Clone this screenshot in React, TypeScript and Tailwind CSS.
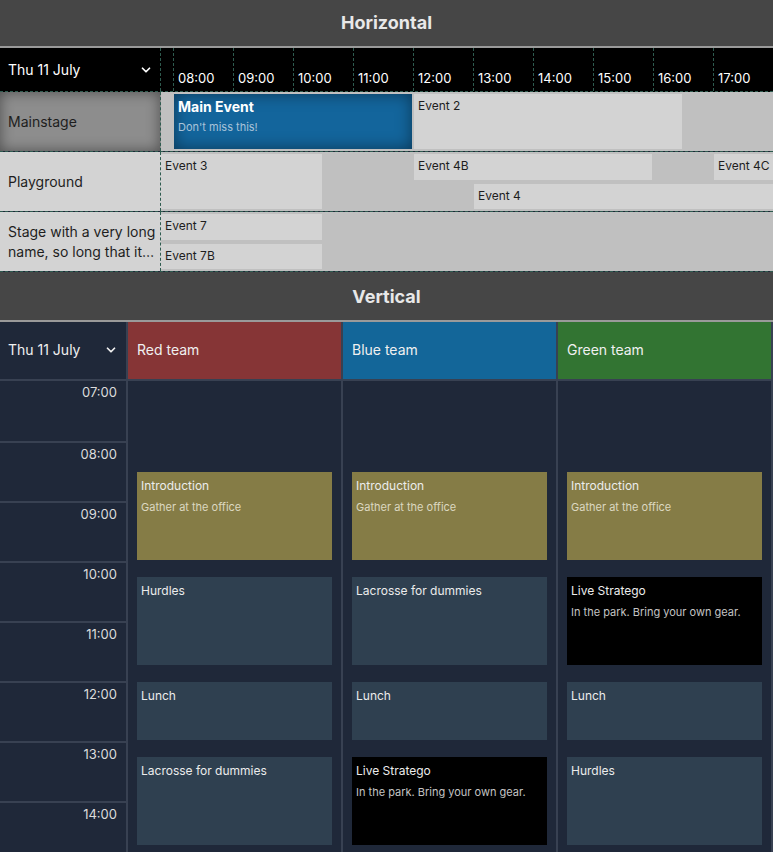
import { ChevronDown } from 'lucide-react';

type HEvent = { title: string; sub?: string; left: number; width: number; top: number; height: number; main?: boolean };
type HRow = { name: string; highlight?: boolean; events: HEvent[] };
type VEvent = { title: string; sub?: string; start: number; end: number; tone: 'olive' | 'slate' | 'black' };

const hours = ['08:00', '09:00', '10:00', '11:00', '12:00', '13:00', '14:00', '15:00', '16:00', '17:00'];

const rows: HRow[] = [
  {
    name: 'Mainstage',
    highlight: true,
    events: [
      { title: 'Main Event', sub: "Don't miss this!", left: 13, width: 238, top: 2, height: 55, main: true },
      { title: 'Event 2', left: 253, width: 268, top: 2, height: 55 }
    ]
  },
  {
    name: 'Playground',
    events: [
      { title: 'Event 3', left: 0, width: 161, top: 2, height: 55 },
      { title: 'Event 4B', left: 253, width: 238, top: 2, height: 26 },
      { title: 'Event 4C', left: 553, width: 120, top: 2, height: 26 },
      { title: 'Event 4', left: 313, width: 400, top: 32, height: 25 }
    ]
  },
  {
    name: 'Stage with a very long name, so long that it just keeps going on and on',
    events: [
      { title: 'Event 7', left: 0, width: 161, top: 2, height: 26 },
      { title: 'Event 7B', left: 0, width: 161, top: 32, height: 25 }
    ]
  }
];

// minutes from 07:00
const teams: { name: string; color: string; events: VEvent[] }[] = [
  {
    name: 'Red team',
    color: 'bg-[#863536]',
    events: [
      { title: 'Introduction', sub: 'Gather at the office', start: 90, end: 180, tone: 'olive' },
      { title: 'Hurdles', start: 195, end: 285, tone: 'slate' },
      { title: 'Lunch', start: 300, end: 360, tone: 'slate' },
      { title: 'Lacrosse for dummies', start: 375, end: 465, tone: 'slate' }
    ]
  },
  {
    name: 'Blue team',
    color: 'bg-[#136699]',
    events: [
      { title: 'Introduction', sub: 'Gather at the office', start: 90, end: 180, tone: 'olive' },
      { title: 'Lacrosse for dummies', start: 195, end: 285, tone: 'slate' },
      { title: 'Lunch', start: 300, end: 360, tone: 'slate' },
      { title: 'Live Stratego', sub: 'In the park. Bring your own gear.', start: 375, end: 465, tone: 'black' }
    ]
  },
  {
    name: 'Green team',
    color: 'bg-[#327432]',
    events: [
      { title: 'Introduction', sub: 'Gather at the office', start: 90, end: 180, tone: 'olive' },
      { title: 'Live Stratego', sub: 'In the park. Bring your own gear.', start: 195, end: 285, tone: 'black' },
      { title: 'Lunch', start: 300, end: 360, tone: 'slate' },
      { title: 'Hurdles', start: 375, end: 465, tone: 'slate' }
    ]
  }
];

const vHours = ['07:00', '08:00', '09:00', '10:00', '11:00', '12:00', '13:00', '14:00', '15:00', '16:00'];

const toneClass = {
  olive: 'bg-[#857c46]',
  slate: 'bg-[#2f4050]',
  black: 'bg-black'
};

const subClass = {
  olive: 'text-[#dcd8c0]',
  slate: 'text-[#c9ced4]',
  black: 'text-[#c4c4c4]'
};

function SectionTitle({ label, tall }: { label: string; tall?: boolean }) {
  return <div className={`flex shrink-0 items-center justify-center border-b-2 border-[#9a9a9a] bg-[#464646] ${tall ? 'h-[50px] pt-[2px]' : 'h-[48px]'}`}>
    <span className="text-lg font-bold text-[#e8e8e8]">{label}</span>
  </div>;
}

function Horizontal() {
  return <div className="shrink-0">
    <SectionTitle label="Horizontal" />
    <div className="flex h-11 border-b border-dashed border-[#2e5b4f] bg-black text-white">
      <div className="flex w-[161px] shrink-0 items-center justify-between border-r border-dashed border-[#2e5b4f] pl-2 pr-[7px]">
        <span className="text-sm">Thu 11 July</span>
        <ChevronDown size={14} strokeWidth={3} />
      </div>
      <div className="flex min-w-0 flex-1 overflow-hidden pl-[12px]">
        {hours.map(hour => <div key={hour} className="flex w-[60px] shrink-0 items-end border-l border-dashed border-[#2e5b4f] pb-[5px] pl-1 text-[13px] leading-4">
          {hour}
        </div>)}
      </div>
    </div>
    {rows.map(row => <div key={row.name} className="flex h-[60px] border-b border-dashed border-[#2e5b4f]">
      <div className={`flex w-[161px] shrink-0 items-center border-r border-dashed border-[#2e5b4f] pl-2 pr-[4px] text-sm leading-5 text-[#1e1e1e] ${row.highlight ? 'bg-[#8d8d8d] shadow-[inset_0_0_14px_rgba(0,0,0,0.45)]' : 'bg-[#d3d3d3]'}`}>
        <span className="line-clamp-2">{row.name}</span>
      </div>
      <div className="relative min-w-0 flex-1 overflow-hidden bg-[#c0c0c0]">
        {row.events.map(event => <div
          key={event.title}
          className={event.main
            ? 'absolute bg-[#13659c] px-1 pt-[3px] shadow-[inset_0_0_16px_rgba(0,0,0,0.45)]'
            : 'absolute bg-[#d3d3d3] px-1 pt-[4px]'}
          style={{ left: event.left, width: event.width, top: event.top, height: event.height }}
        >
          {event.main
            ? <>
              <div className="text-sm font-bold leading-5 text-white">{event.title}</div>
              <div className="mt-[3px] text-[11px] leading-[14px] text-[#a9c3d9]">{event.sub}</div>
            </>
            : <div className="text-xs leading-4 text-[#1e1e1e]">{event.title}</div>}
        </div>)}
      </div>
    </div>)}
  </div>;
}

function Vertical() {
  return <div className="flex min-h-0 flex-1 flex-col">
    <SectionTitle label="Vertical" tall />
    <div className="flex min-h-0 flex-1 flex-col gap-[2px] bg-[#384152] pr-[2px]">
      <div className="grid h-[57px] shrink-0 grid-cols-[126px_213px_213px_213px] gap-x-[2px] text-sm text-[#f0f0f0]">
        <div className="flex items-center justify-between bg-[#1f2839] pb-[1px] pl-2 pr-2">
          <span>Thu 11 July</span>
          <ChevronDown size={14} strokeWidth={3} />
        </div>
        {teams.map(team => <div key={team.name} className={`flex items-center pb-[1px] pl-[9px] ${team.color}`}>{team.name}</div>)}
      </div>
      <div className="grid min-h-0 flex-1 grid-cols-[126px_213px_213px_213px] gap-x-[2px] overflow-hidden">
        <div className="flex flex-col bg-[#1f2839]">
          {vHours.map(hour => <div key={hour} className="h-[60px] shrink-0 border-t-2 border-[#384152] pr-[9px] pt-[2px] text-right text-[13px] leading-[18px] text-[#dcdcdc] first:border-t-0">
            {hour}
          </div>)}
        </div>
        {teams.map(team => <div key={team.name} className="relative bg-[#1f2839]">
          {team.events.map(event => <div
            key={event.title + event.start}
            className={`absolute left-[9px] right-[9px] px-1 pt-[6px] ${toneClass[event.tone]}`}
            style={{ top: event.start + 1, height: event.end - event.start - 2 }}
          >
            <div className="text-xs leading-4 text-[#ececec]">{event.title}</div>
            {event.sub && <div className={`mt-[6px] text-[11px] leading-[14px] ${subClass[event.tone]}`}>{event.sub}</div>}
          </div>)}
        </div>)}
      </div>
    </div>
  </div>;
}

export default function App() {
  return <div className="flex h-screen w-full flex-col overflow-hidden bg-[#1f2839] font-['Inter',sans-serif]">
    <Horizontal />
    <Vertical />
  </div>;
}
